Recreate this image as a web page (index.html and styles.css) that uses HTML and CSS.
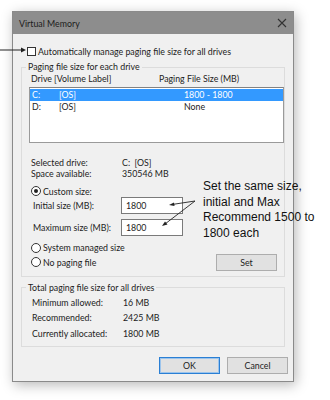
FILE: index.html
```html
<!DOCTYPE html>
<html>
<head>
    <title>Virtual Memory</title>
    <link rel="stylesheet" href="styles.css">
</head>
<body>
    <div class="page">
        <svg class="pointer" width="30" height="10" viewBox="0 0 30 10">
            <line x1="0" y1="5" x2="22" y2="5" stroke="#222" stroke-width="1"/>
            <polygon points="21,2.5 26,5 21,7.5" fill="#222"/>
        </svg>

        <div class="window">
            <div class="titlebar">
                <span>Virtual Memory</span>
                <svg class="close" width="10" height="10" viewBox="0 0 10 10">
                    <path d="M1 1 L9 9 M9 1 L1 9" stroke="#333" stroke-width="1.1"/>
                </svg>
            </div>

            <div class="content">
                <div class="check-row">
                    <span class="checkbox"></span>
                    <span>Automatically manage paging file size for all drives</span>
                </div>

                <fieldset class="group">
                    <legend>Paging file size for each drive</legend>
                    <div class="list-head">
                        <span>Drive</span><span>[Volume Label]</span><span>Paging File Size (MB)</span>
                    </div>
                    <div class="listbox">
                        <div class="list-item selected">
                            <span>C:</span><span>[OS]</span><span>1800 - 1800</span>
                        </div>
                        <div class="list-item">
                            <span>D:</span><span>[OS]</span><span>None</span>
                        </div>
                    </div>

                    <div class="info">
                        <span>Selected drive:</span><span>C:&nbsp; [OS]</span>
                        <span>Space available:</span><span>350546 MB</span>
                    </div>

                    <div class="radio-row custom">
                        <span class="radio checked"></span><span>Custom size:</span>
                    </div>
                    <div class="size-row">
                        <span>Initial size (MB):</span>
                        <span class="textbox">1800</span>
                    </div>
                    <div class="size-row second">
                        <span>Maximum size (MB):</span>
                        <span class="textbox">1800</span>
                    </div>
                    <div class="radio-row system">
                        <span class="radio"></span><span>System managed size</span>
                    </div>
                    <div class="radio-row nopaging">
                        <span class="radio"></span><span>No paging file</span>
                        <span class="button set">Set</span>
                    </div>
                </fieldset>

                <fieldset class="group totals">
                    <legend>Total paging file size for all drives</legend>
                    <div class="totals-grid">
                        <span>Minimum allowed:</span><span>16 MB</span>
                        <span>Recommended:</span><span>2425 MB</span>
                        <span>Currently allocated:</span><span>1800 MB</span>
                    </div>
                </fieldset>

                <div class="actions">
                    <span class="button ok">OK</span>
                    <span class="button">Cancel</span>
                </div>
            </div>
        </div>

        <p class="note">Set the same size,<br>initial and Max<br>Recommend 1500 to<br>1800 each</p>
        <svg class="note-arrows" width="40" height="32" viewBox="0 0 40 32">
            <line x1="35" y1="5" x2="12" y2="8.5" stroke="#222" stroke-width="0.9"/>
            <polygon points="9,9 14,6.5 14.5,10" fill="#222"/>
            <line x1="35" y1="5" x2="5" y2="28" stroke="#222" stroke-width="0.9"/>
            <polygon points="2,30 5,25.5 7.5,28.5" fill="#222"/>
        </svg>
    </div>
</body>
</html>
```

FILE: styles.css
```css
*, ::after, ::before {
    box-sizing: border-box;
}

body {
    margin: 0;
    background: #fff;
    font-family: Lato, sans-serif;
    font-size: 8.8px;
    color: #222;
    white-space: nowrap;
}

.page {
    position: relative;
    width: 330px;
    height: 400px;
    padding: 11px 0 0 12px;
}

.pointer {
    position: absolute;
    left: 0;
    top: 45px;
}

.window {
    width: 282px;
    height: 371px;
    border: 1px solid #8a8a8a;
    background: #f0f0f0;
    box-shadow: 2px 3px 12px rgba(0, 0, 0, .28);
}

.titlebar {
    height: 22px;
    background: #8d8d8d;
    display: flex;
    align-items: center;
    justify-content: space-between;
    padding: 0 6px 0 6px;
    color: #1c1c1c;
    font-size: 8.8px;
}

.content {
    padding: 11px 7px 0 8px;
}

.check-row {
    height: 12px;
    display: flex;
    align-items: center;
    padding-left: 6px;
    gap: 2px;
}

.checkbox {
    width: 9px;
    height: 9px;
    border: 1px solid #333;
    background: #fff;
}

.group {
    margin: 4px 0 0 0;
    padding: 0 1px 5px 7px;
    border: 1px solid #dcdcdc;
    min-width: 0;
    width: 264px;
}

.group legend {
    padding: 0 2px;
    margin-left: -3px;
    height: 12px;
    line-height: 12px;
}

.list-head {
    height: 12px;
    line-height: 12px;
    display: grid;
    grid-template-columns: 23px 105px 1fr;
    padding-left: 2px;
}

.listbox {
    margin-top: 2px;
    height: 56px;
    width: 255px;
    background: #fff;
    border: 1px solid #9a9a9a;
    border-top-color: #828282;
    padding-top: 1px;
}

.list-item {
    height: 11.5px;
    line-height: 11.5px;
    display: grid;
    grid-template-columns: 27px 125px 1fr;
    padding-left: 2px;
}

.list-item.selected {
    background: #3399ff;
    color: #fff;
}

.info {
    margin-top: 14px;
    display: grid;
    grid-template-columns: 91px 1fr;
    grid-auto-rows: 11px;
    line-height: 11px;
    padding-left: 2px;
}

.radio-row {
    display: flex;
    align-items: center;
    gap: 2px;
    padding-left: 2px;
}

.radio {
    width: 10px;
    height: 10px;
    border: 1px solid #333;
    border-radius: 50%;
    background: #fff;
    display: flex;
    align-items: center;
    justify-content: center;
}

.radio.checked::after {
    content: "";
    width: 4px;
    height: 4px;
    border-radius: 50%;
    background: #222;
}

.custom {
    margin-top: 6.5px;
    height: 11px;
}

.size-row {
    height: 17px;
    display: grid;
    grid-template-columns: 88px 62px;
    align-items: center;
    padding-left: 4px;
}

.size-row.second {
    margin-top: 5px;
}

.textbox {
    height: 17px;
    line-height: 15px;
    background: #fff;
    border: 1px solid #7a7a7a;
    padding-left: 4px;
}

.system {
    margin-top: 6px;
    height: 12px;
}

.nopaging {
    height: 17px;
}

.button {
    width: 61px;
    height: 17px;
    line-height: 15px;
    text-align: center;
    background: #e1e1e1;
    border: 1px solid #adadad;
}

.set {
    margin-left: auto;
    margin-right: 6px;
}

.totals {
    margin-top: 5px;
}

.totals-grid {
    margin-top: 1px;
    display: grid;
    grid-template-columns: 91px 1fr;
    grid-auto-rows: 15.5px;
    line-height: 15.5px;
    padding-left: 3px;
}

.actions {
    margin-top: 10px;
    margin-right: -2px;
    display: flex;
    justify-content: flex-end;
    gap: 7px;
}

.button.ok {
    border-color: #2a7fd4;
    box-shadow: inset 0 0 0 1px #9cc4ec;
}

.note {
    position: absolute;
    left: 203px;
    top: 179px;
    margin: 0;
    font-family: "Liberation Sans", Arial, sans-serif;
    font-size: 12px;
    line-height: 15.7px;
    color: #111;
}

.note-arrows {
    position: absolute;
    left: 160px;
    top: 196px;
}
```
